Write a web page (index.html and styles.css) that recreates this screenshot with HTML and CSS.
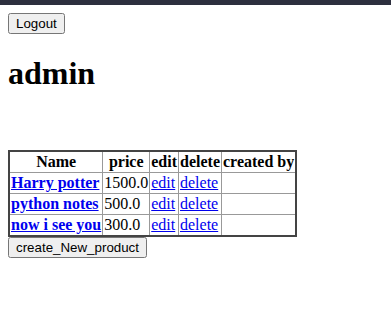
FILE: index.html
```html
<!DOCTYPE html>
<html lang="en">
<head>
    <meta charset="UTF-8">
    <title>admin</title>
    <link rel="stylesheet" href="styles.css">
</head>
<body>
    <div class="topbar"></div>
    <div class="page">
        <form>
            <button type="button" class="btn">Logout</button>
        </form>
        <h1 class="title">admin</h1>
        <br><br>
        <table class="products">
            <tr>
                <th>Name</th>
                <th>price</th>
                <th>edit</th>
                <th>delete</th>
                <th>created by</th>
            </tr>
            <tr>
                <th><a href="#">Harry potter</a></th>
                <td>1500.0</td>
                <td><a href="#">edit</a></td>
                <td><a href="#">delete</a></td>
                <td></td>
            </tr>
            <tr>
                <th><a href="#">python notes</a></th>
                <td>500.0</td>
                <td><a href="#">edit</a></td>
                <td><a href="#">delete</a></td>
                <td></td>
            </tr>
            <tr>
                <th><a href="#">now i see you</a></th>
                <td>300.0</td>
                <td><a href="#">edit</a></td>
                <td><a href="#">delete</a></td>
                <td></td>
            </tr>
        </table>
        <button type="button" class="btn">create_New_product</button>
    </div>
</body>
</html>
```

FILE: styles.css
```css
body {
    margin: 0;
    font-family: "Liberation Serif", serif;
}

.topbar {
    height: 5px;
    background-color: #2d2f3e;
}

.page {
    padding: 8px;
}

form {
    margin: 0;
}

.btn {
    font-family: "Liberation Sans", Arial, sans-serif;
    font-size: 13.33px;
}

.title {
    font-size: 2em;
    margin: 0.67em 0;
}

/* Tabela de produtos */
.products {
    border-collapse: collapse;
    border: 2px solid #444;
}

.products th,
.products td {
    border: 1px solid #999;
    padding: 1px;
}

.products tr th:first-child {
    text-align: left;
}

.products tr:first-child th {
    text-align: center;
}
```
